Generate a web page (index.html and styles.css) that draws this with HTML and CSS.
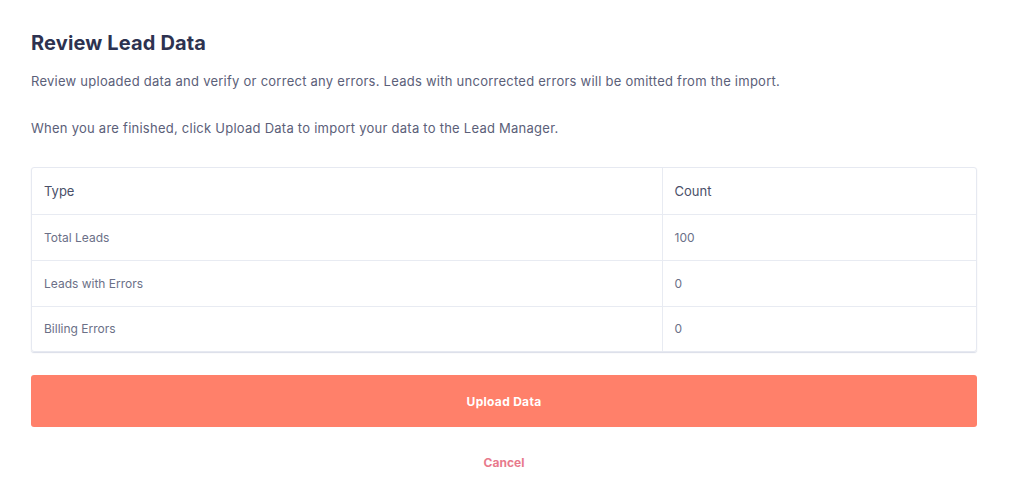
FILE: index.html
```html
<!DOCTYPE html>
<html lang="en">
<head>
<meta charset="utf-8">
<title>Review Lead Data</title>
<link rel="stylesheet" href="styles.css">
</head>
<body>
<main class="page">
  <h1 class="title">Review Lead Data</h1>
  <p class="lead">Review uploaded data and verify or correct any errors. Leads with uncorrected errors will be omitted from the import.</p>
  <p class="lead second">When you are finished, click Upload Data to import your data to the Lead Manager.</p>
  <div class="table-wrap">
    <table class="summary">
      <thead>
        <tr><th class="col-type">Type</th><th>Count</th></tr>
      </thead>
      <tbody>
        <tr><td class="col-type">Total Leads</td><td>100</td></tr>
        <tr><td class="col-type">Leads with Errors</td><td>0</td></tr>
        <tr><td class="col-type">Billing Errors</td><td>0</td></tr>
      </tbody>
    </table>
  </div>
  <button class="upload" type="button">Upload Data</button>
  <div class="cancel-row"><a class="cancel" href="#">Cancel</a></div>
</main>
</body>
</html>
```
FILE: styles.css
```css
* { box-sizing: border-box; }
html, body { margin: 0; padding: 0; background: #ffffff; }
body {
  font-family: Inter, "Noto Sans", "Liberation Sans", sans-serif;
  color: #5b6079;
}
.page {
  width: 946px;
  margin-left: 31px;
  padding-top: 29px;
}
.title {
  margin: 0;
  font-size: 20px;
  line-height: 28px;
  font-weight: 700;
  color: #2d3250;
  letter-spacing: 0.15px;
}
.lead {
  margin: 14px 0 0;
  font-size: 13px;
  line-height: 20px;
  color: #5b6079;
  letter-spacing: 0.25px;
}
.lead.second { margin-top: 27px; }
.table-wrap {
  margin-top: 29px;
  border: 1px solid #e6e9f1;
  border-radius: 3px;
  box-shadow: 0 1px 1px rgba(180, 188, 210, 0.5);
  overflow: hidden;
}
.summary {
  width: 100%;
  border-collapse: collapse;
  font-size: 12px;
}
.summary th, .summary td {
  height: 46px;
  padding: 0 12px;
  text-align: left;
  vertical-align: middle;
  border-bottom: 1px solid #e8ebf2;
}
.summary tbody tr:last-child td { border-bottom: none; height: 45px; }
.summary th {
  font-weight: 400;
  font-size: 13px;
  color: #4a5069;
}
.summary td { color: #6b7087; }
.summary .col-type {
  width: 630px;
  border-right: 1px solid #e8ebf2;
}
.upload {
  display: block;
  width: 100%;
  height: 52px;
  margin-top: 23px;
  border: none;
  border-radius: 3px;
  background: #ff806a;
  color: #ffffff;
  font-family: inherit;
  font-size: 12px;
  font-weight: 700;
  letter-spacing: 0.3px;
  cursor: pointer;
}
.cancel-row {
  text-align: center;
  margin-top: 25px;
  line-height: 18px;
}
.cancel {
  color: #e87a8c;
  font-size: 12px;
  font-weight: 700;
  text-decoration: none;
}
```
